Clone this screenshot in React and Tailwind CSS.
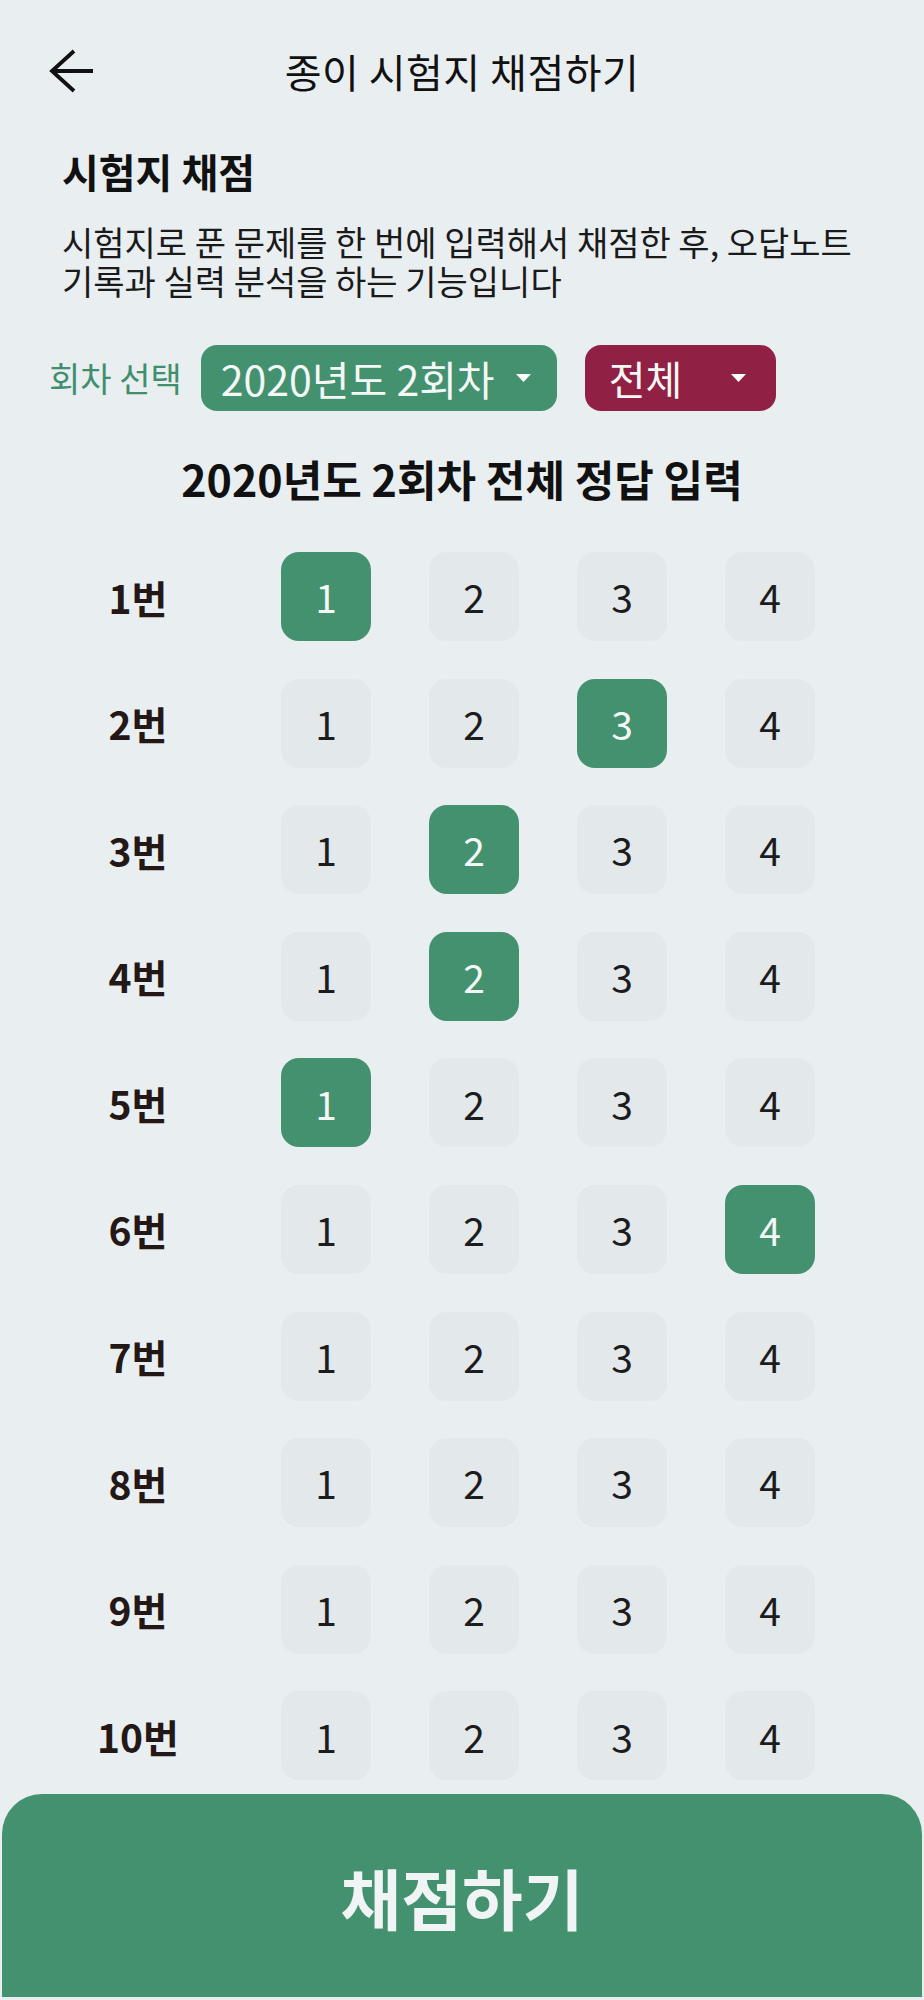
import React, { useState } from 'react';

const font = { fontFamily: '"Noto Sans CJK KR", "Noto Sans", sans-serif' };

const INITIAL = [1, 3, 2, 2, 1, 4, 0, 0, 0, 0];

const Caret = () => (
    <svg width="15" height="8" viewBox="0 0 15 8" className="shrink-0">
        <polygon points="0,0 15,0 7.5,8" fill="#ffffff" />
    </svg>
);

const BackArrow = () => (
    <svg width="46" height="44" viewBox="0 0 46 44" fill="none">
        <path d="M25 2 L3 22 L25 42 M3 22 L44 22" stroke="#111111" strokeWidth="3.8" />
    </svg>
);

const AnswerRow = ({ no, picked, onPick }) => (
    <div className="flex items-center h-[89px]">
        <div className="w-[276px] text-center text-[39px] leading-[46px] font-bold text-[#231815]">
            {no}번
        </div>
        <div className="flex gap-[58px] ml-[5px]">
            {[1, 2, 3, 4].map((n) => (
                <button
                    key={n}
                    onClick={() => onPick(n)}
                    className={
                        picked === n
                            ? 'w-[90px] h-[89px] rounded-[18px] bg-[#43916f] text-[#f3f7f6] text-[39px] font-normal flex items-center justify-center'
                            : 'w-[90px] h-[89px] rounded-[18px] bg-[#e3e8eb] text-[#1c1c1c] text-[39px] font-normal flex items-center justify-center'
                    }
                >
                    {n}
                </button>
            ))}
        </div>
    </div>
);

const App = () => {
    const [answers, setAnswers] = useState(INITIAL);

    const pick = (idx, n) => {
        const next = [...answers];
        next[idx] = next[idx] === n ? 0 : n;
        setAnswers(next);
    };

    return (
        <div style={font} className="w-[924px] h-[2000px] bg-[#e9eef0] flex flex-col overflow-hidden">
            {/* 상단 바 */}
            <div className="mt-[21px] h-[100px] grid grid-cols-[1fr_auto_1fr] items-center">
                <div className="pl-[49px] flex items-center">
                    <BackArrow />
                </div>
                <h1 className="text-[40px] leading-[50px] font-normal text-[#111111] tracking-[0.5px]">
                    종이 시험지 채점하기
                </h1>
                <div />
            </div>

            <div className="pl-[62px] mt-[26px]">
                <h2 className="text-[40px] leading-[48px] font-bold text-[#111111]">시험지 채점</h2>
                <p className="mt-[27px] text-[34px] leading-[39px] text-[#1a1a1a]">
                    시험지로 푼 문제를 한 번에 입력해서 채점한 후, 오답노트
                    <br />
                    기록과 실력 분석을 하는 기능입니다
                </p>
            </div>

            {/* 회차 선택 */}
            <div className="mt-[45px] pl-[49px] flex items-center h-[66px]">
                <span className="text-[34px] leading-[40px] text-[#3f8f6e]">회차 선택</span>
                <div className="ml-[19px] w-[356px] h-[66px] rounded-[16px] bg-[#43916f] flex items-center justify-between pl-[20px] pr-[26px]">
                    <span className="text-[41px] leading-[50px] font-normal text-[#f3f7f6]">2020년도 2회차</span>
                    <Caret />
                </div>
                <div className="ml-[28px] w-[191px] h-[66px] rounded-[16px] bg-[#902044] flex items-center justify-between pl-[24px] pr-[30px]">
                    <span className="text-[40px] leading-[50px] text-[#f3f7f6]">전체</span>
                    <Caret />
                </div>
            </div>

            <h3 className="mt-[43px] text-center text-[43px] leading-[48px] font-bold text-[#111111]">
                2020년도 2회차 전체 정답 입력
            </h3>

            <div className="mt-[50px] flex flex-col gap-[37.6px]">
                {answers.map((a, i) => (
                    <AnswerRow key={i} no={i + 1} picked={a} onPick={(n) => pick(i, n)} />
                ))}
            </div>

            <button className="mt-[14px] mx-[2px] h-[203px] rounded-t-[40px] bg-[#43916f] flex items-center justify-center">
                <span className="text-[66px] leading-[80px] font-bold text-[#f0f4f4]">채점하기</span>
            </button>
        </div>
    );
};

export default App;
